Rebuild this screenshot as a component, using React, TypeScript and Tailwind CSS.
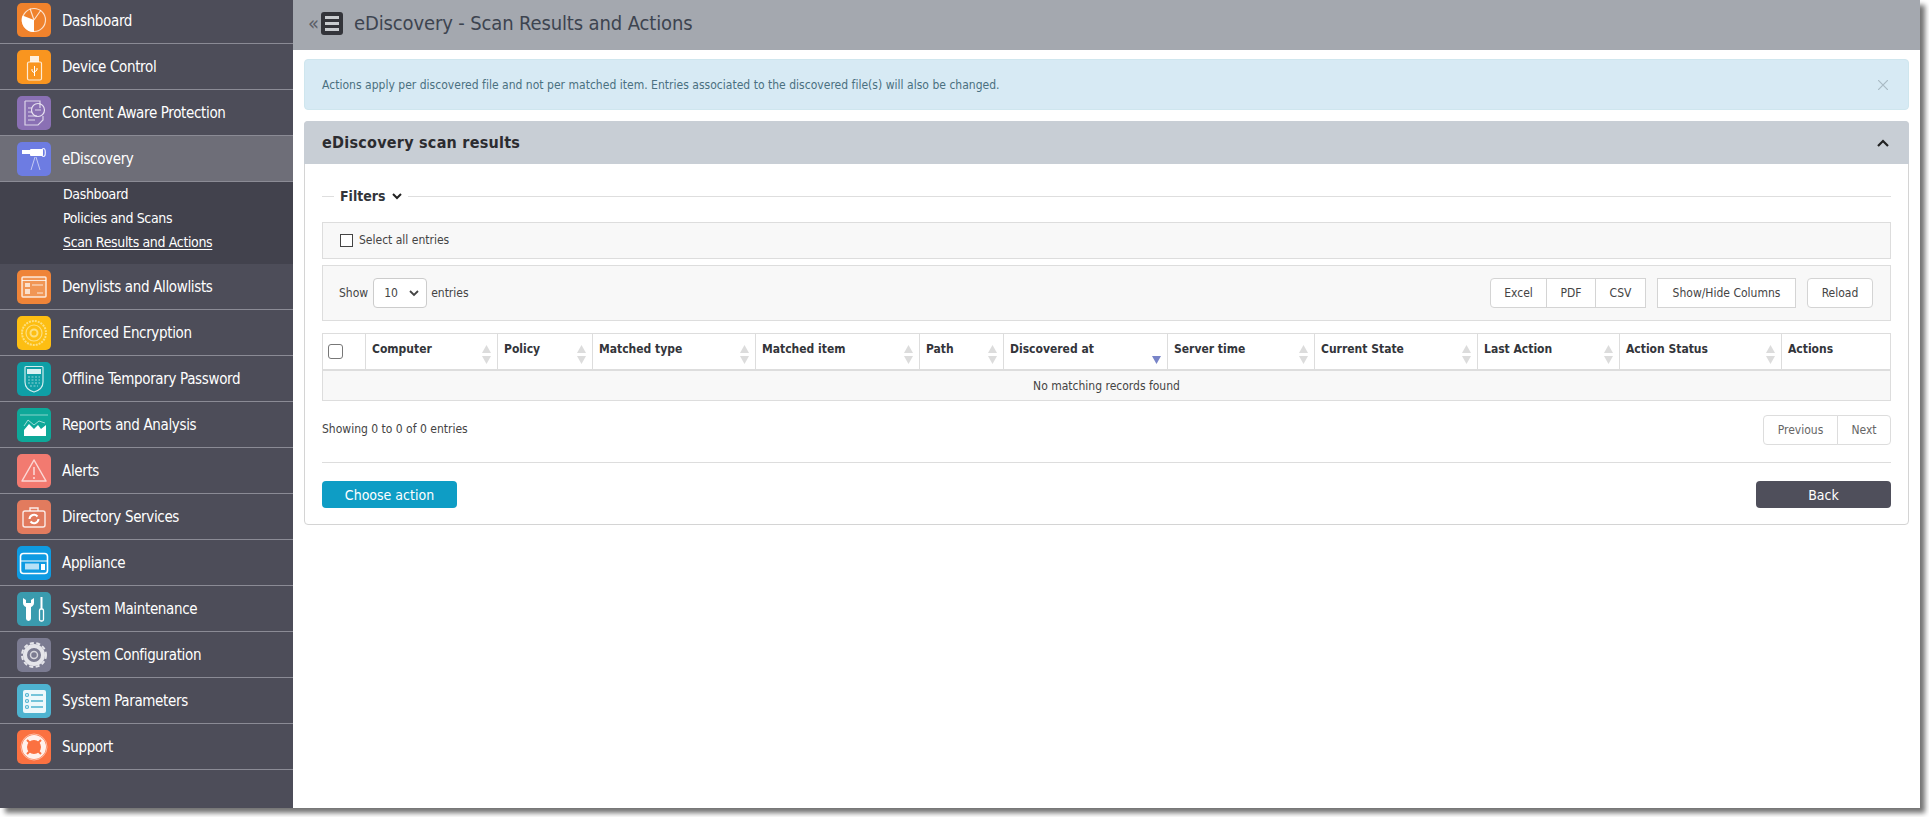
import type { ReactNode } from 'react';

const ui = 'font-["DejaVu_Sans_Condensed","DejaVu_Sans",sans-serif]';

function Tile({ bg, children }: { bg: string; children: ReactNode }) {
  return (
    <span className="block w-[34px] h-[34px] rounded-[5px] shrink-0 overflow-hidden" style={{ background: bg }}>
      <svg viewBox="0 0 34 34" width="34" height="34" fill="none" stroke="#fff" strokeWidth="1.2">{children}</svg>
    </span>
  );
}

const menu: { label: string; bg: string; icon: ReactNode }[] = [
  { label: 'Dashboard', bg: '#f0822c', icon: <><circle cx="17" cy="17" r="11.5" strokeOpacity=".75" /><path d="M17 17V29A12 12 0 0 1 5.5 12.5L17 17Z" fill="#fff" stroke="none" /><path d="M17 17L13 5.5M17 17L24 7" strokeOpacity=".75" /></> },
  { label: 'Device Control', bg: '#f9951f', icon: <><path d="M13 6h9v6h-9z" fill="#fff" fillOpacity=".85" stroke="none" /><rect x="10.5" y="12" width="14" height="18" rx="1.5" strokeOpacity=".8" /><path d="M17.5 16v10M15 19v2l2.5 2M20 18v2l-2.5 2" strokeWidth="1" /></> },
  { label: 'Content Aware Protection', bg: '#8a70b4', icon: <><path d="M8 5h15v7M8 5v24h13l5-5v-4" strokeOpacity=".7" /><circle cx="21" cy="14" r="6.5" strokeOpacity=".8" /><path d="M18 14h6M11 12h4M11 16h4M11 20h9M11 24h7" strokeOpacity=".7" /></> },
  { label: 'eDiscovery', bg: '#6d7ce2', icon: <><rect x="5" y="8" width="8" height="4" fill="#fff" stroke="none" /><rect x="13" y="7" width="13" height="7" rx="1" fill="#fff" stroke="none" /><ellipse cx="26.5" cy="10.5" rx="1.8" ry="4" strokeOpacity=".9" /><path d="M18 15L14 28M19 15L23 28" strokeOpacity=".6" strokeWidth="1" /></> },
  { label: 'Denylists and Allowlists', bg: '#ef8438', icon: <><rect x="5" y="7" width="24" height="20" rx="1" fill="#fff" fillOpacity=".15" strokeOpacity=".8" strokeWidth="1.5" /><path d="M5 10.5h24" strokeOpacity=".8" /><path d="M8 13h5v4H8zM8 19h5v5H8z" fill="#fff" fillOpacity=".7" stroke="none" /><path d="M15 15h11M20 23h6" strokeOpacity=".8" /></> },
  { label: 'Enforced Encryption', bg: '#fdbe12', icon: <><circle cx="17" cy="17" r="12" stroke="#fddf7e" strokeWidth="2" strokeDasharray="2 1" /><circle cx="17" cy="17" r="8" stroke="#fddf7e" /><circle cx="17" cy="17" r="3.5" stroke="#fddf7e" strokeWidth="2" /></> },
  { label: 'Offline Temporary Password', bg: '#0f9fa6', icon: <><path d="M9 4.5h16a1 1 0 0 1 1 1V20c0 5-4 8.5-9 10-5-1.5-9-5-9-10V5.500a1 1 0 0 1 1-1Z" strokeOpacity=".8" /><rect x="10" y="7" width="14" height="5" fill="#fff" fillOpacity=".85" stroke="none" /><path d="M11 15h12M11 18h12M11 21h12M13 24h8" strokeDasharray="2 1.5" strokeOpacity=".55" /></> },
  { label: 'Reports and Analysis', bg: '#0ea899', icon: <><path d="M3 7h28" strokeOpacity=".5" /><path d="M7 28V22L12 16L17 21L21 17L24 21L29 17V28Z" fill="#fff" stroke="none" /><path d="M7 18L11 12L17 17L22 13L28 15" strokeOpacity=".6" strokeWidth="1" /></> },
  { label: 'Alerts', bg: '#f27a70', icon: <><path d="M17 6L29 27H5Z" strokeOpacity=".7" strokeWidth="1.5" strokeLinejoin="round" /><path d="M17 13v8M17 23v2" strokeOpacity=".75" strokeWidth="1.5" /></> },
  { label: 'Directory Services', bg: '#e27b5e', icon: <><rect x="6" y="11" width="22" height="16" rx="2" strokeOpacity=".85" strokeWidth="1.4" /><path d="M13 11V8h8v3" strokeOpacity=".85" strokeWidth="1.4" /><path d="M12.500 19a4.500 4.500 0 0 1 8-2.500M21.500 19a4.500 4.500 0 0 1-8 2.500" strokeWidth="2" /></> },
  { label: 'Appliance', bg: '#0e9be2', icon: <><rect x="3.500" y="7.500" width="27" height="20" rx="3" strokeWidth="1.6" /><path d="M4 15h26" strokeWidth="1" /><rect x="8" y="17.500" width="14" height="6" fill="#fff" fillOpacity=".7" stroke="none" /><rect x="24" y="18" width="4" height="6" fill="#fff" stroke="none" /></> },
  { label: 'System Maintenance', bg: '#3a9bae', icon: <><path d="M6 6v5c0 2 1.500 3.500 3 4v11.500a2.500 2.500 0 0 0 5 0V15c1.500-.500 3-2 3-4V6l-3 2v3h-5V8Z" fill="#fff" stroke="none" /><path d="M24.500 5v12" strokeWidth="2" /><rect x="22.500" y="17" width="4" height="12" rx="1.500" strokeWidth="1.300" /></> },
  { label: 'System Configuration', bg: '#7b7b91', icon: <><circle cx="17" cy="17" r="9" stroke="#e5e5ea" strokeWidth="4" /><circle cx="17" cy="17" r="12" stroke="#e5e5ea" strokeWidth="2" strokeDasharray="4 2.500" /><circle cx="17" cy="17" r="3.500" stroke="#d5d5dc" strokeWidth="1.500" /></> },
  { label: 'System Parameters', bg: '#4eb3d0', icon: <><rect x="6" y="6" width="23" height="23" rx="2" fill="#fff" fillOpacity=".9" stroke="none" /><path d="M14 11h12M14 17h12M14 23h12" stroke="#4eb3d0" strokeWidth="1.500" /><circle cx="10" cy="11" r="1.500" stroke="#4eb3d0" /><circle cx="10" cy="17" r="1.500" stroke="#4eb3d0" /><circle cx="10" cy="23" r="1.500" stroke="#4eb3d0" /></> },
  { label: 'Support', bg: '#fb7141', icon: <><circle cx="17" cy="17" r="9.500" strokeWidth="5" strokeOpacity=".9" /><circle cx="17" cy="17" r="13" strokeWidth="1" strokeOpacity=".5" /><path d="M10 10l4 4M24 10l-4 4M10 24l4-4M24 24l-4-4" stroke="#fb7141" strokeWidth="2" /></> },
];

const submenu = ['Dashboard', 'Policies and Scans', 'Scan Results and Actions'];

const columns: [string, boolean][] = [
  ['Computer', true], ['Policy', true], ['Matched type', true], ['Matched item', true], ['Path', true], ['Discovered at', true],
  ['Server time', true], ['Current State', true], ['Last Action', true], ['Action Status', true], ['Actions', false],
];

function SortArrows({ active }: { active: boolean }) {
  return (
    <svg viewBox="0 0 11 19" width="11" height="19" className="absolute right-[5px] top-[11px]">
      {!active && <path d="M5.500 0L10 8H1Z" fill="#dcdcdc" />}
      <path d="M1 11H10L5.500 19Z" fill={active ? '#7884c8' : '#dcdcdc'} />
    </svg>
  );
}

function Sidebar() {
  return (
    <nav className="w-[293px] shrink-0 bg-[#4d4d59] text-white text-[15px]">
      {menu.map(m => (
        <div key={m.label}>
          <div className={`flex items-center gap-[11px] pl-[17px] border-b border-[#8b8b95] ${m.label === 'eDiscovery' ? 'bg-[#6e6e78]' : ''} ${m.label === 'Dashboard' ? 'h-[44px] pb-[3px]' : 'h-[46px]'}`}>
            <Tile bg={m.bg}>{m.icon}</Tile>
            <span className="pt-[2px] tracking-[-0.35px]">{m.label}</span>
          </div>
          {m.label === 'eDiscovery' && (
            <div className="bg-[#42424d] h-[82px] pl-[63px] flex flex-col text-[14px] tracking-[-0.35px]">
              {submenu.map((s, i) => (
                <span key={s} className={`h-[24px] flex items-center ${i === 2 ? 'underline underline-offset-2' : ''}`}>{s}</span>
              ))}
            </div>
          )}
        </div>
      ))}
    </nav>
  );
}

export default function App() {
  const btn = 'h-full flex items-center justify-center border border-[#d4d4d4] bg-white';
  return (
    <div className={`${ui} w-[1929px] h-[817px] bg-white overflow-hidden`}>
      <div className="w-[1920px] h-[808px] flex bg-white shadow-[5px_5px_5px_rgba(0,0,0,0.55)]">
        <Sidebar />
        <main className="flex-1 min-w-0 text-[#444]">
          <header className="h-[50px] bg-[#a4a8af] flex items-center pl-[15px] pb-[4px]">
            <span className="text-[20px] text-[#5c6068] leading-none">«</span>
            <span className="w-[22px] h-[23px] ml-[2px] rounded-[3px] bg-[#33343a] flex flex-col justify-center gap-[3px] px-[4px]">
              <i className="h-[3px] bg-[#c9ccd0]" /><i className="h-[3px] bg-[#c9ccd0]" /><i className="h-[3px] bg-[#c9ccd0]" />
            </span>
            <h1 className="ml-[11px] text-[20px] tracking-[-0.13px] text-[#3d4450]">eDiscovery - Scan Results and Actions</h1>
          </header>

          <div className="px-[11px] pt-[9px]">
            <div className="h-[51px] rounded-[4px] border border-[#cfe6ee] bg-[#d7eaf4] flex items-center justify-between pl-[17px] pr-[20px] text-[12px] tracking-[0.02px] text-[#4a7080]">
              <span>Actions apply per discovered file and not per matched item. Entries associated to the discovered file(s) will also be changed.</span>
              <svg viewBox="0 0 10 10" width="10" height="10" stroke="#a9bac4" strokeWidth="1.200"><path d="M0 0L10 10M10 0L0 10" /></svg>
            </div>

            <section className="mt-[11px] h-[404px] rounded-[4px] border border-[#d4d4d4] bg-white">
              <div className="-m-px h-[43px] rounded-t-[4px] bg-[#c8ced5] flex items-center justify-between pl-[18px] pr-[20px] pt-[1px]">
                <h2 className="text-[16px] font-bold tracking-[0.25px] text-[#2c2c30]">eDiscovery scan results</h2>
                <svg viewBox="0 0 12 8" width="12" height="8" fill="none" stroke="#222" strokeWidth="2.200"><path d="M1 7L6 2L11 7" /></svg>
              </div>

              <div className="px-[17px] text-[12px]">
                <div className="flex items-center h-[24px] mt-[21px]">
                  <i className="w-[12px] h-px bg-[#dedede]" />
                  <span className="ml-[6px] text-[14px] font-bold text-[#33353a] flex items-center gap-[6px]">
                    Filters
                    <svg viewBox="0 0 10 8" width="10" height="8" fill="none" stroke="#222" strokeWidth="2"><path d="M1 2L5 6L9 2" /></svg>
                  </span>
                  <i className="flex-1 h-px bg-[#dedede] ml-[6px]" />
                </div>

                <div className="mt-[14px] h-[37px] bg-[#f8f8f8] border border-[#dddddd] flex items-center pl-[17px] gap-[6px]">
                  <span className="w-[13px] h-[13px] border border-[#444] bg-white" />
                  <span className="pb-[2px]">Select all entries</span>
                </div>

                <div className="mt-[6px] h-[56px] bg-[#f8f8f8] border border-[#dddddd] flex items-center pl-[16px] pr-[17px]">
                  <span>Show</span>
                  <span className="ml-[5px] w-[54px] h-[30px] bg-white border border-[#cccccc] rounded-[4px] flex items-center justify-between pl-[10px] pr-[7px]">
                    10
                    <svg viewBox="0 0 10 8" width="10" height="8" fill="none" stroke="#444" strokeWidth="1.800"><path d="M1 2L5 6L9 2" /></svg>
                  </span>
                  <span className="ml-[4px]">entries</span>
                  <div className="ml-auto h-[30px] flex">
                    <span className={`${btn} w-[57px] rounded-l-[4px]`}>Excel</span>
                    <span className={`${btn} w-[50px] -ml-px`}>PDF</span>
                    <span className={`${btn} w-[51px] -ml-px`}>CSV</span>
                    <span className={`${btn} w-[139px] ml-[11px]`}>Show/Hide Columns</span>
                    <span className={`${btn} w-[66px] ml-[11px] rounded-[4px]`}>Reload</span>
                  </div>
                </div>

                <div className="mt-[12px] border-x border-b border-[#dddddd]">
                  <div className="grid grid-cols-[42px_132px_95px_163px_164px_84px_164px_147px_163px_142px_162px_1fr] h-[38px] border-t border-b-2 border-[#dddddd] font-bold text-[#33353a]">
                    <div className="flex items-start pl-[5px] pt-[10px]">
                      <span className="w-[15px] h-[15px] border border-[#777] rounded-[3px] bg-white" />
                    </div>
                    {columns.map(([name, sortable], i) => (
                      <div key={name} className="relative border-l border-[#dddddd] pl-[6px] pt-[6px]">
                        {name}
                        {sortable && <SortArrows active={i === 5} />}
                      </div>
                    ))}
                  </div>
                  <div className="h-[29px] bg-[#f8f8f8] flex items-center justify-center">No matching records found</div>
                </div>

                <div className="mt-[14px] flex items-center justify-between h-[30px]">
                  <span className="pb-[2px]">Showing 0 to 0 of 0 entries</span>
                  <div className="h-full flex text-[#666]">
                    <span className={`${btn} w-[75px] rounded-l-[4px] border-[#dddddd]`}>Previous</span>
                    <span className={`${btn} w-[54px] -ml-px rounded-r-[4px] border-[#dddddd]`}>Next</span>
                  </div>
                </div>

                <div className="mt-[17px] border-t border-[#dddddd] pt-[18px] flex justify-between text-[14px] text-white">
                  <button className="w-[135px] h-[27px] pt-[1px] rounded-[4px] bg-[#0e9dc5]">Choose action</button>
                  <button className="w-[135px] h-[27px] pt-[1px] rounded-[4px] bg-[#4f4f5b]">Back</button>
                </div>
              </div>
            </section>
          </div>
        </main>
      </div>
    </div>
  );
}
